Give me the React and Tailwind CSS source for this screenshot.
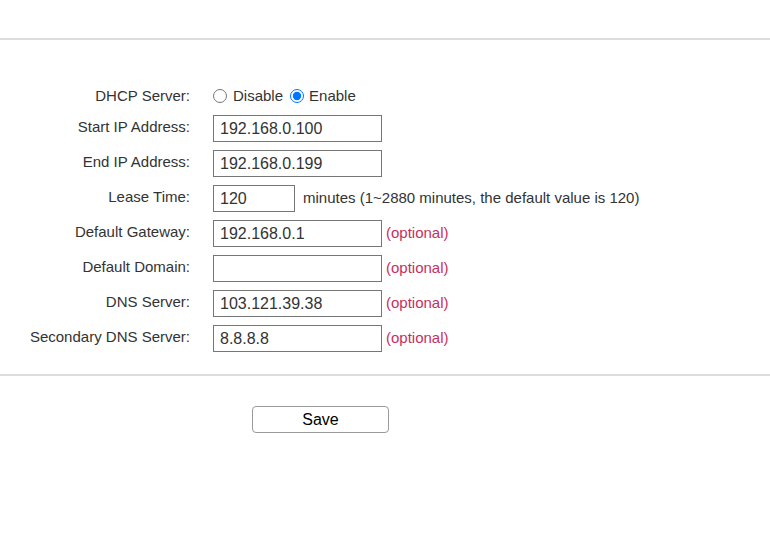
import React from "react";

const rows = [
  { label: "Start IP Address:", value: "192.168.0.100" },
  { label: "End IP Address:", value: "192.168.0.199" },
  { label: "Lease Time:", value: "120", short: true, note: "minutes (1~2880 minutes, the default value is 120)" },
  { label: "Default Gateway:", value: "192.168.0.1", optional: true },
  { label: "Default Domain:", value: "", optional: true },
  { label: "DNS Server:", value: "103.121.39.38", optional: true },
  { label: "Secondary DNS Server:", value: "8.8.8.8", optional: true },
];

export default function App() {
  return (
    <div className="w-[770px] h-[550px] bg-white text-[#333] text-[15px] font-['Liberation_Sans',Arial,sans-serif] overflow-hidden">
      <div className="h-[38px]" />
      <div className="h-[2px] bg-[#dcdcdc]" />

      {/* DHCP settings form */}
      <div className="pt-[44px] pb-px">
        <div className="flex items-center h-[24px] mb-[7px]">
          <div className="w-[190px] text-right">DHCP Server:</div>
          <div className="ml-[23px] flex items-center">
            <input type="radio" name="dhcp" className="m-0 w-[14px] h-[14px]" />
            <span className="ml-[6px]">Disable</span>
            <input type="radio" name="dhcp" defaultChecked className="m-0 w-[14px] h-[14px] ml-[7px] accent-[#0075ff]" />
            <span className="ml-[5px]">Enable</span>
          </div>
        </div>

        {rows.map((r) => (
          <div key={r.label} className="flex items-center h-[27px] mb-[8px]">
            <div className="w-[190px] text-right pb-[3px]">{r.label}</div>
            <input
              type="text"
              defaultValue={r.value}
              className={
                (r.short ? "w-[82px]" : "w-[169px]") +
                " ml-[23px] h-[27px] border border-[#767676] px-[6px] text-[16px] text-[#333] outline-none"
              }
            />
            {r.note && <span className="ml-[8px]">{r.note}</span>}
            {r.optional && <span className="ml-[4px] text-[#c5305d]">(optional)</span>}
          </div>
        ))}
      </div>

      <div className="mt-[13px] h-[2px] bg-[#dcdcdc]" />

      <div className="pt-[30px] pl-[252px]">
        <button className="w-[137px] h-[27px] rounded-[4px] border border-[#9a9a9a] bg-white text-[16px] text-black">
          Save
        </button>
      </div>
    </div>
  );
}
